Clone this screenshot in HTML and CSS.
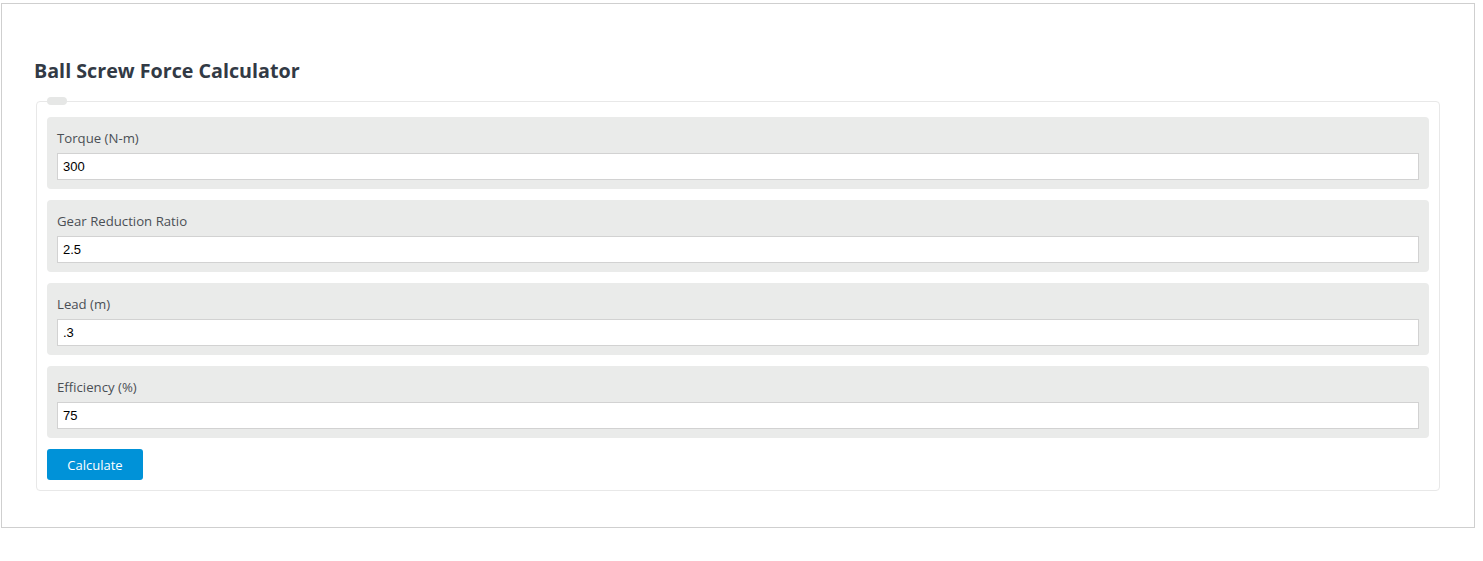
FILE: index.html
```html
<!DOCTYPE html>
<html>
<head>
<meta charset="utf-8">
<link rel="stylesheet" href="styles.css">
</head>
<body>
<div class="wrap">
  <h2 class="title">Ball Screw Force Calculator</h2>
  <div class="calc">
    <span class="legend"></span>
    <div class="group">
      <label class="label">Torque (N-m)</label>
      <input class="input" type="text" value="300">
    </div>
    <div class="group">
      <label class="label">Gear Reduction Ratio</label>
      <input class="input" type="text" value="2.5">
    </div>
    <div class="group">
      <label class="label">Lead (m)</label>
      <input class="input" type="text" value=".3">
    </div>
    <div class="group">
      <label class="label">Efficiency (%)</label>
      <input class="input" type="text" value="75">
    </div>
    <button class="btn" type="button">Calculate</button>
  </div>
</div>
</body>
</html>
```
FILE: styles.css
```css
html, body { margin: 0; padding: 0; background: #fff; }
body { font-family: "Open Sans", "Noto Sans", Arial, sans-serif; }
.wrap {
  box-sizing: border-box;
  width: 1474px;
  height: 525px;
  margin: 3px 0 0 1px;
  border: 1px solid #cfcfcf;
  padding: 53px 34px 35px;
}
.title {
  margin: 0 0 16px -2px;
  font-size: 19.7px;
  line-height: 28px;
  font-weight: 700;
  color: #323a45;
}
.calc {
  position: relative;
  border: 1px solid #e8e8e8;
  border-radius: 4px;
  padding: 15px 10px 10px;
  display: flex;
  flex-direction: column;
  gap: 11px;
  align-items: flex-start;
}
.legend {
  position: absolute;
  left: 10px;
  top: -5px;
  width: 20px;
  height: 8px;
  border-radius: 4px;
  background: #e6e7e6;
}
.group {
  align-self: stretch;
  background: #eaebea;
  border-radius: 4px;
  padding: 11px 10px 9px;
  display: flex;
  flex-direction: column;
}
.label {
  font-size: 13.2px;
  line-height: 20px;
  color: #4a4f55;
  margin-bottom: 5px;
}
.input {
  box-sizing: border-box;
  height: 27px;
  border: 1px solid #d2d2d2;
  background: #fff;
  padding: 0 5px;
  font-family: "Liberation Sans", Arial, sans-serif;
  font-size: 13px;
  color: #000;
  outline: none;
}
.btn {
  width: 96px;
  height: 31px;
  background: #0092d8;
  color: #fff;
  border: none;
  border-radius: 3px;
  font-family: "Open Sans", "Noto Sans", Arial, sans-serif;
  font-size: 13px;
  padding: 0;
}
```
